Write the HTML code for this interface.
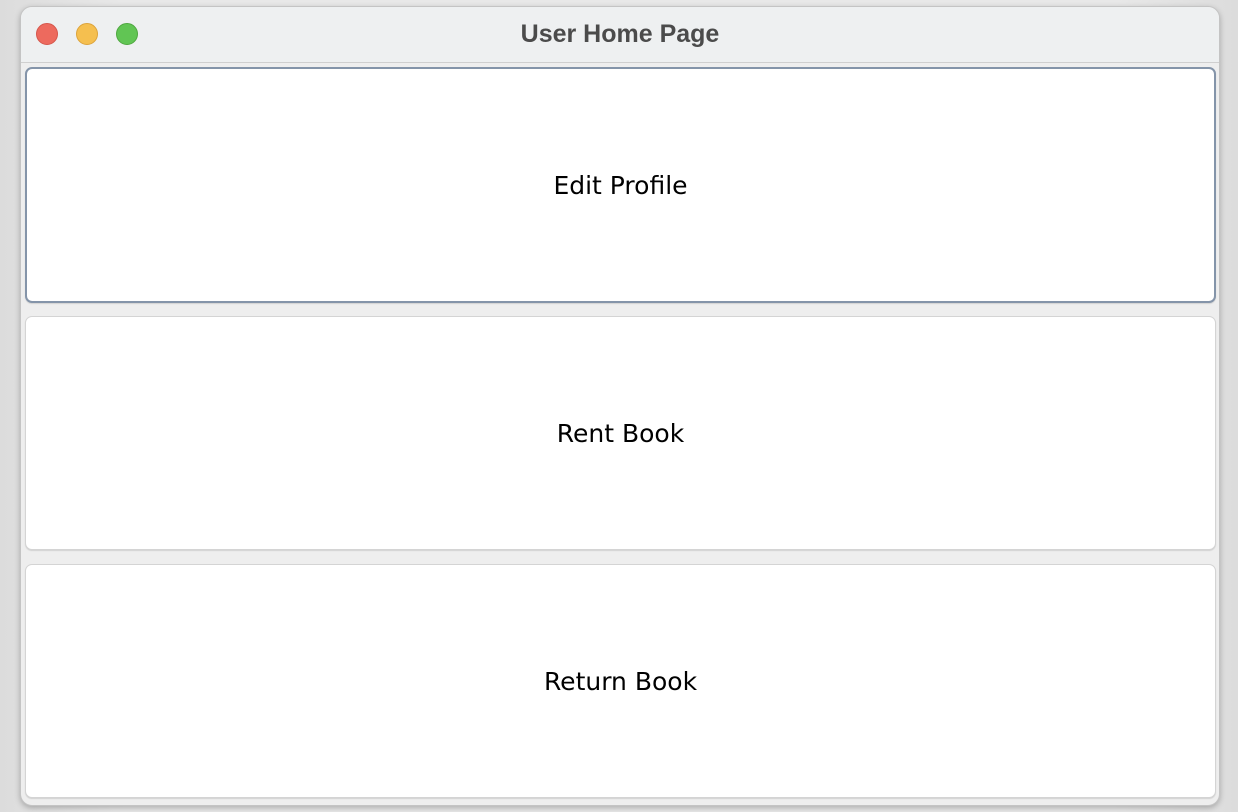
<!DOCTYPE html>
<html><head><meta charset="utf-8"><style>
html,body{margin:0;padding:0;width:1238px;height:812px;overflow:hidden;background:linear-gradient(90deg,#dcdcdc,#e8e8e8 10%,#e8e8e8 90%,#dcdcdc);font-family:"Liberation Sans",sans-serif}
.win{position:absolute;left:20px;top:6px;width:1200px;height:800px;border-radius:12px;background:#eeeeee;border:1px solid #c4c4c4;box-sizing:border-box;overflow:hidden;box-shadow:0 2px 6px rgba(0,0,0,.25)}
.tb{position:absolute;left:0;top:0;right:0;height:55px;background:#eef0f1;border-bottom:1px solid #cfcfcf}
.dot{position:absolute;top:16px;width:22px;height:22px;border-radius:50%;box-sizing:border-box}
.title{position:absolute;left:0;right:0;top:13px;text-align:center;font-weight:bold;font-size:25px;color:#4b4b4b}
.btn{position:absolute;left:4px;width:1191px;background:#fff;border-radius:7px;box-sizing:border-box;border:1px solid #d4d4d4;box-shadow:0 1px 1px rgba(0,0,0,.12);display:flex;align-items:center;justify-content:center;font-family:"DejaVu Sans","Liberation Sans",sans-serif;font-size:25px;color:#000}
</style></head><body>
<div class="win">
<div class="tb">
<div class="dot" style="left:15px;background:#ed6a5e;border:1px solid #d5564b"></div>
<div class="dot" style="left:55px;background:#f5bf4f;border:1px solid #dca33a"></div>
<div class="dot" style="left:95px;background:#61c554;border:1px solid #4ea73f"></div>
<div class="title">User Home Page</div>
</div>
<div class="btn" style="top:60px;height:236px;border:2px solid #8494a9">Edit Profile</div>
<div class="btn" style="top:309px;height:234px">Rent Book</div>
<div class="btn" style="top:557px;height:234px">Return Book</div>
</div>
</body></html>
